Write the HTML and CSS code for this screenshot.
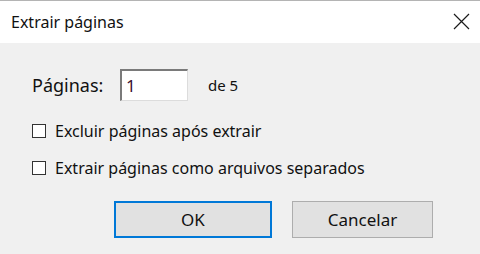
FILE: index.html
```html
<!DOCTYPE html>
<html>
<head>
<meta charset="utf-8">
<link rel="stylesheet" href="styles.css">
</head>
<body>
<div class="dialog">
  <div class="titlebar">
    <span class="title">Extrair páginas</span>
    <svg class="close" width="17" height="17" viewBox="0 0 17 17"><path d="M1 1 L16 16 M16 1 L1 16" stroke="#1a1a1a" stroke-width="1.2" fill="none"/></svg>
  </div>
  <div class="content">
    <div class="pages-row">
      <span class="lbl">Páginas:</span>
      <div class="input"><span class="val">1</span></div>
      <span class="of">de 5</span>
    </div>
    <div class="check-row first"><span class="box"></span><span class="ctext">Excluir páginas após extrair</span></div>
    <div class="check-row"><span class="box"></span><span class="ctext">Extrair páginas como arquivos separados</span></div>
    <div class="buttons">
      <div class="btn ok">OK</div>
      <div class="btn cancel">Cancelar</div>
    </div>
  </div>
</div>
</body>
</html>
```
FILE: styles.css
```css
html, body { margin: 0; padding: 0; }
body { width: 480px; height: 254px; overflow: hidden; font-family: "Noto Sans", "Open Sans", sans-serif; color: #1a1a1a; }
.dialog { width: 480px; height: 254px; border-top: 1px solid #b4b4b4; box-sizing: border-box; background: #f0f0f0; display: flex; flex-direction: column; }
.titlebar { height: 42px; background: #fff; display: flex; align-items: center; justify-content: space-between; padding: 0 10px 0 11px; box-sizing: border-box; }
.title { font-size: 16px; color: #111; margin-top: -1px; }
.close { margin-top: -1px; }
.content { flex: 1; padding: 0 0 0 32px; display: flex; flex-direction: column; }
.pages-row { display: flex; align-items: center; margin-top: 26px; height: 32px; }
.lbl { font-size: 18px; width: 88px; color: #111; }
.input { width: 68px; height: 32px; box-sizing: border-box; background: #fff; border-top: 2px solid #7a7a7a; border-left: 2px solid #7a7a7a; border-right: 1px solid #dcdcdc; border-bottom: 1px solid #dcdcdc; display: flex; align-items: center; padding-left: 4px; }
.val { font-size: 17px; color: #3a1030; }
.of { font-size: 15px; margin-left: 20px; color: #111; }
.check-row { display: flex; align-items: center; height: 20px; margin-top: 17px; font-size: 16px; color: #111; }
.check-row.first { margin-top: 20px; }
.box { width: 12px; height: 12px; border: 1px solid #333; background: #fff; margin-right: 9px; flex: none; }
.buttons { display: flex; gap: 20px; margin-top: 23px; margin-left: 82px; }
.btn { height: 37px; box-sizing: border-box; background: #e1e1e1; border: 1px solid #adadad; display: flex; align-items: center; justify-content: center; font-size: 16px; color: #111; }
.ok { width: 158px; border: 2px solid #0078d7; font-size: 17px; }
.cancel { width: 141px; font-size: 17px; }
```
